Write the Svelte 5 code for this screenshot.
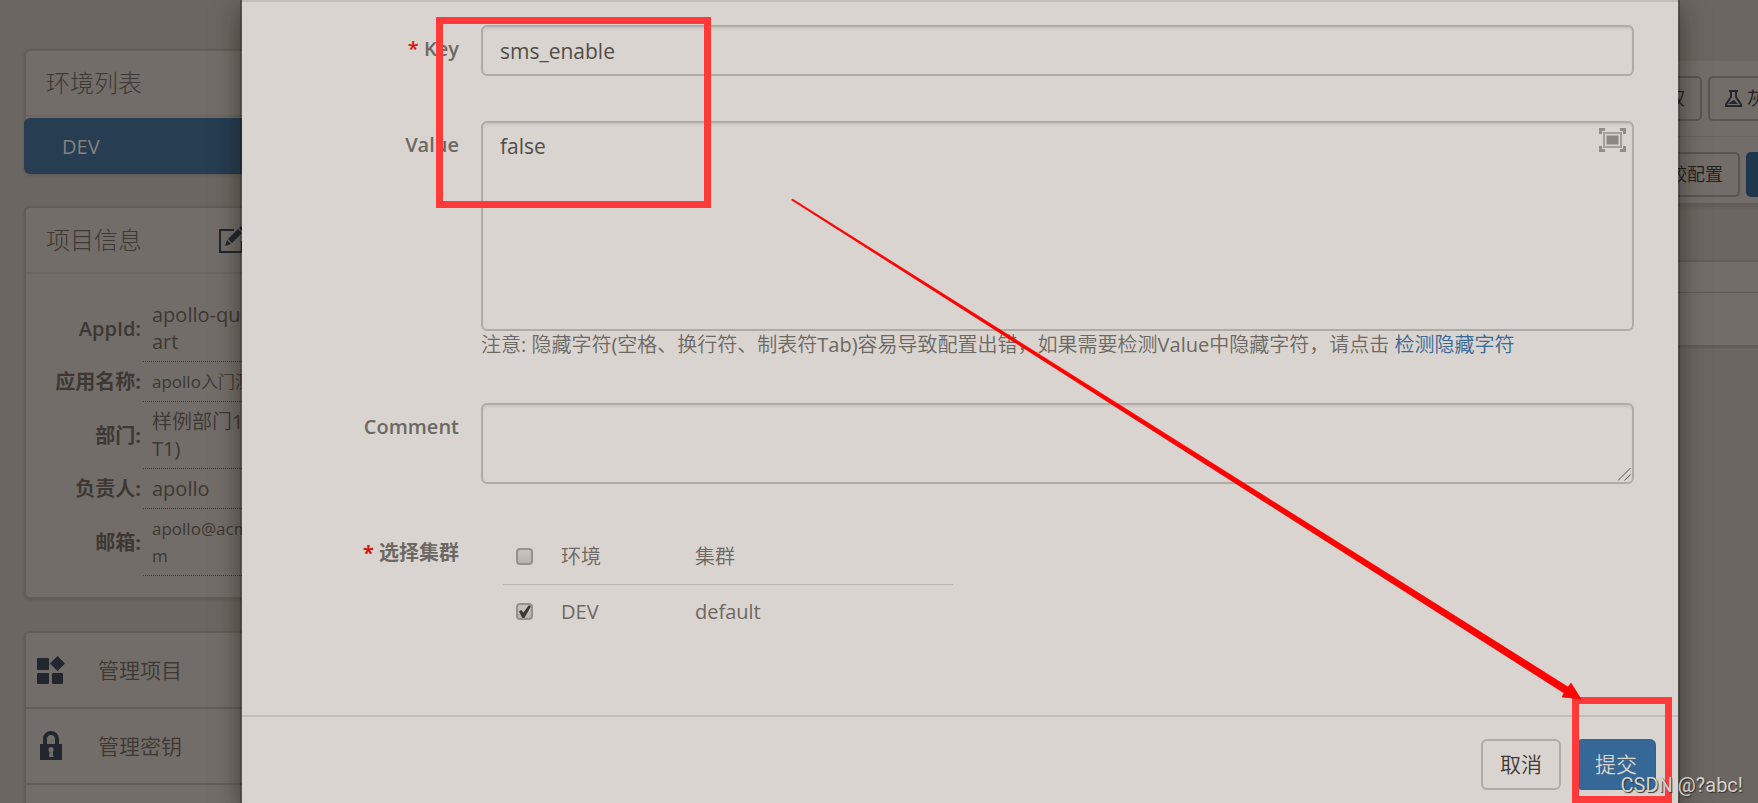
<script>
  const info = [
    { label: 'AppId:', lines: ['apollo-quickst', 'art'] },
    { label: '应用名称:', lines: ['apollo入门测试'], small: true },
    { label: '部门:', lines: ['样例部门1(TES', 'T1)'] },
    { label: '负责人:', lines: ['apollo'] },
    { label: '邮箱:', lines: ['apollo@acme.co', 'm'], small: true }
  ];
  let key = $state('sms_enable');
  let value = $state('false');
  let comment = $state('');
  let allClusters = $state(false);
  let devCluster = $state(true);
</script>

<div class="app">
  <div class="page">
    <aside>
      <section class="card env">
        <header><h2>环境列表</h2></header>
        <a class="env-item" href="#dev">DEV</a>
      </section>

      <section class="card">
        <header>
          <h2>项目信息</h2>
          <button class="icon-btn" aria-label="编辑">
            <svg width="28" height="28" viewBox="0 0 28 28">
              <path d="M16 4H2v22h22V15" fill="none" stroke="#22262e" stroke-width="2" />
              <path d="M7 20l2-6 4 4zM10 13L20 3l4 4-10 10zM21 2l2-2 4 4-2 2z" fill="#22262e" />
            </svg>
          </button>
        </header>
        <table class="info">
          <tbody>
            {#each info as row}
              <tr>
                <th scope="row">{row.label}</th>
                <td class:small={row.small}>
                  {#each row.lines as line}<div>{line}</div>{/each}
                </td>
              </tr>
            {/each}
          </tbody>
        </table>
      </section>

      <nav class="card">
        <a class="nav-item" href="#project">
          <svg width="30" height="30" viewBox="0 0 30 30" fill="#22262e">
            <rect x="1" y="3" width="12" height="12" rx="1" />
            <rect x="1" y="18" width="12" height="11" rx="1" />
            <rect x="16" y="18" width="11" height="11" rx="1" />
            <path d="M21.500 1l7.500 7.500-7.500 7.500-7.500-7.500z" />
          </svg>
          <span>管理项目</span>
        </a>
        <a class="nav-item" href="#secret">
          <svg width="30" height="30" viewBox="0 0 30 30">
            <path d="M9 14V8a6 6 0 0 1 12 0v6" fill="none" stroke="#22262e" stroke-width="4" />
            <path fill="#22262e" fill-rule="evenodd" d="M4 13h22v16H4zM15 16a2.800 2.800 0 0 0-1.500 5L13 26h4.500l-.8-5A2.800 2.800 0 0 0 15 16z" />
          </svg>
          <span>管理密钥</span>
        </a>
        <div class="nav-item"></div>
      </nav>
    </aside>

    <main>
      <section class="panel">
        <div class="bar first">
          <button class="btn">授权</button>
          <button class="btn wide">
            <svg width="17" height="17" viewBox="0 0 17 17">
              <path d="M4 1h9M6 1v6l-5 7.500V16h15v-1.500L11 7V1" fill="none" stroke="#22262e" stroke-width="2" />
              <path d="M3 14l4-3 2-1 4 4z" fill="#22262e" />
            </svg>
            <span>灰度</span>
          </button>
        </div>
        <div class="bar second">
          <button class="btn">比较配置</button>
          <button class="btn primary">新增配置</button>
        </div>
      </section>
      <section class="rows">
        <div class="row head"></div>
        <div class="row"></div>
      </section>
    </main>
  </div>

  <div class="modal" role="dialog" aria-label="配置项">
    <form>
      <div class="field">
        <label for="key"><em>*</em> Key</label>
        <input id="key" class="control" type="text" bind:value={key} />
      </div>

      <div class="field">
        <label for="value">Value</label>
        <div class="area">
          <textarea id="value" class="control tall" bind:value={value}></textarea>
          <button type="button" class="icon-btn expand" aria-label="全屏">
            <svg width="27" height="24" viewBox="0 0 27 24">
              <path d="M0 0h6v3H3v3H0zM21 0h6v6h-3V3h-3zM0 18h3v3h3v3H0zM24 18h3v6h-6v-3h3z" fill="#918c87" />
              <rect x="5" y="5" width="17" height="14" fill="none" stroke="#a39e99" stroke-width="2" />
              <rect x="7.500" y="7.500" width="12" height="9" fill="#8b8681" />
            </svg>
          </button>
          <p class="note">注意: 隐藏字符(空格、换行符、制表符Tab)容易导致配置出错，如果需要检测Value中隐藏字符，请点击 <a href="#check">检测隐藏字符</a></p>
        </div>
      </div>

      <div class="field">
        <label for="comment">Comment</label>
        <div class="area">
          <textarea id="comment" class="control short" bind:value={comment}></textarea>
          <svg class="grip" width="13" height="13" viewBox="0 0 13 13">
            <path d="M0 12.500L12.500 0M6.500 12.500l6-6" stroke="#55504c" fill="none" />
          </svg>
        </div>
      </div>

      <div class="field">
        <span class="label cjk"><em>*</em> 选择集群</span>
        <table class="clusters">
          <tbody>
            <tr>
              <td><input type="checkbox" id="all" aria-label="全选" bind:checked={allClusters} /></td>
              <td><label for="all">环境</label></td>
              <td>集群</td>
            </tr>
            <tr>
              <td><input type="checkbox" id="dev" aria-label="DEV" bind:checked={devCluster} /></td>
              <td><label for="dev">DEV</label></td>
              <td>default</td>
            </tr>
          </tbody>
        </table>
      </div>
    </form>
    <footer>
      <button class="action">取消</button>
      <button class="action submit">提交</button>
    </footer>
  </div>

  <svg class="marks" viewBox="0 0 1758 803" preserveAspectRatio="xMinYMin meet" aria-hidden="true">
    <g fill="none" stroke="#ff3a38" stroke-width="7">
      <rect x="439.500" y="20.500" width="268" height="184" />
      <rect x="1575.500" y="700.500" width="93" height="99" />
    </g>
    <path d="M791.500 200L792.500 199 1568 687l3-4 10 16-19-2 2-4z" fill="#fe0000" stroke="#fe0000" stroke-width="0.600" />
  </svg>
  <span class="watermark">CSDN @?abc!</span>
</div>

<style>
  :global(body) {
    margin: 0;
    background: #6b6661;
  }
  .app, .app * {
    box-sizing: border-box;
  }
  .app {
    position: relative;
    height: 100vh;
    overflow: hidden;
    background: #6b6661;
    color: #3d3833;
    font: 400 20px/27px "Open Sans", "Noto Sans CJK SC DemiLight", "Noto Sans CJK SC", sans-serif;
  }
  button, input, textarea {
    font: inherit;
    color: inherit;
    margin: 0;
  }
  a {
    text-decoration: none;
    color: inherit;
  }
  .page {
    display: flex;
    width: calc(100% + 120px);
  }
  aside {
    width: 320px;
    flex: none;
    padding: 49px 0 0 24px;
    display: flex;
    flex-direction: column;
    gap: 32px;
  }
  .card {
    border: 2px solid #625d58;
    border-radius: 6px;
    background: #726d68;
    box-shadow: 0 1px 3px #5d5853;
  }
  .card header {
    height: 66px;
    padding: 0 20px;
    display: flex;
    align-items: center;
    gap: 76px;
    border-bottom: 2px solid #6a6560;
  }
  h2 {
    margin: 0;
    font-family: "Open Sans", "Noto Sans CJK SC Light", "Noto Sans CJK SC", sans-serif;
    font-size: 24px;
    line-height: 32px;
    font-weight: 300;
    white-space: nowrap;
  }
  .env {
    border-bottom: 0;
  }
  .env-item {
    display: flex;
    align-items: center;
    height: 56px;
    margin: 1px 0 0 -2px;
    padding-left: 38px;
    border-radius: 6px;
    background: #263d52;
    color: #85817d;
  }
  .icon-btn {
    border: 0;
    padding: 0;
    background: none;
    display: flex;
  }
  .info {
    width: 100%;
    margin: 21px 0;
    border-collapse: collapse;
  }
  .info th {
    width: 117px;
    padding: 0 2px 0 0;
    text-align: right;
    font-family: "Open Sans", "Noto Sans CJK SC", sans-serif;
    font-weight: 600;
    white-space: nowrap;
  }
  .info tr:not(:first-child) th {
    font-weight: 700;
  }
  .info td {
    padding: 6px 0 6px 9px;
    border-bottom: 1px dotted #3d3833;
    white-space: nowrap;
  }
  .info .small {
    font-size: 17px;
  }
  .nav-item {
    display: flex;
    align-items: center;
    gap: 32px;
    height: 76px;
    padding-left: 10px;
    border-bottom: 2px solid #625d58;
    font-size: 21px;
  }
  main {
    flex: 1;
    padding: 61px 0 0 30px;
  }
  .panel {
    background: #726d68;
    border-bottom: 2px solid #625d58;
    box-shadow: 0 1px 3px #5d5853;
  }
  .bar {
    display: flex;
    justify-content: flex-end;
    gap: 6px;
  }
  .first {
    padding: 15px 70px 15px 0;
    border-bottom: 1px solid #66615c;
  }
  .second {
    padding: 15px 22px 6px 0;
  }
  .btn {
    height: 45px;
    padding: 0 15px;
    border: 2px solid #5a5550;
    border-radius: 5px;
    background: none;
    color: #22201e;
    font-size: 18px;
    display: flex;
    align-items: center;
    gap: 5px;
    white-space: nowrap;
  }
  .wide {
    width: 100px;
  }
  .primary {
    width: 110px;
    background: #1f374d;
    border-color: #1f374d;
    color: #85817d;
  }
  .rows {
    margin-top: 55px;
    background: #726d68;
    border-top: 2px solid #625d58;
    border-bottom: 3px solid #625d58;
  }
  .row {
    height: 52px;
  }
  .head {
    height: 31px;
    border-bottom: 1px solid #5d5853;
  }

  .modal {
    position: absolute;
    top: 0;
    bottom: 0;
    left: 240px;
    right: 78px;
    border: solid rgba(0, 0, 0, 0.2);
    border-width: 0 2px;
    background: #d9d4cf;
    background-clip: padding-box;
    color: #6d6863;
    box-shadow: 0 8px 23px rgba(20, 15, 10, 0.5);
  }
  form {
    border-top: 2px solid #c3beb9;
    padding: 23px 44px 76px 0;
    display: flex;
    flex-direction: column;
    gap: 45px;
  }
  .field {
    display: grid;
    grid-template-columns: 217px minmax(0, 1fr);
    gap: 22px;
  }
  .field > label, .label {
    padding-top: 10px;
    text-align: right;
    font-weight: 600;
  }
  .field > .cjk {
    font-family: "Open Sans", "Noto Sans CJK SC", sans-serif;
    font-weight: 700;
  }
  em {
    color: #dd1111;
    font-style: normal;
  }
  .control {
    display: block;
    width: 100%;
    height: 51px;
    padding: 10px 17px;
    border: 2px solid #b0aba6;
    border-radius: 6px;
    outline: 0;
    resize: none;
    background: transparent;
    color: #524d48;
    font-size: 21px;
    line-height: 27px;
    box-shadow: inset 0 2px 2px #ccc7c2;
  }
  .tall {
    height: 210px;
  }
  .short {
    height: 81px;
  }
  .area {
    position: relative;
  }
  .expand {
    position: absolute;
    top: 7px;
    right: 8px;
  }
  .grip {
    position: absolute;
    right: 3px;
    bottom: 3px;
  }
  .note {
    margin: 0;
    white-space: nowrap;
  }
  .note a {
    color: #356896;
  }
  .clusters {
    width: 450px;
    margin-left: 22px;
    border-collapse: collapse;
  }
  .clusters td {
    height: 55px;
    padding: 0;
    vertical-align: middle;
  }
  .clusters tr:first-child td {
    border-bottom: 1px solid #bbb6b1;
  }
  .clusters td:nth-child(1) {
    width: 58px;
    padding-left: 13px;
  }
  .clusters td:nth-child(2) {
    width: 134px;
  }
  .clusters input {
    appearance: none;
    display: grid;
    width: 17px;
    height: 17px;
    border: 2px solid #96918c;
    border-radius: 4px;
    background: linear-gradient(#c9c4bf, #b8b3ae);
  }
  .clusters input:checked::before {
    content: "";
    background: #3d3833;
    clip-path: polygon(8% 48%, 26% 36%, 42% 58%, 82% 0, 100% 8%, 48% 100%, 32% 96%);
  }
  footer {
    border-top: 2px solid #c3beb9;
    padding: 22px;
    display: flex;
    justify-content: flex-end;
    gap: 15px;
  }
  .action {
    height: 51px;
    padding: 0 17px;
    border: 2px solid #b0aba6;
    border-radius: 6px;
    background: transparent;
    color: #3d3833;
    font-size: 21px;
  }
  .submit {
    border-color: #316592;
    background: #356896;
    color: #d9d4cf;
  }
  .marks {
    position: absolute;
    top: 0;
    left: 0;
    width: 100%;
    pointer-events: none;
  }
  .watermark {
    position: absolute;
    right: 15px;
    bottom: 4px;
    color: #d4d1ce;
    font-family: Roboto, sans-serif;
    font-size: 20px;
    text-shadow: 1px 1px 1px #33302d;
  }
</style>
